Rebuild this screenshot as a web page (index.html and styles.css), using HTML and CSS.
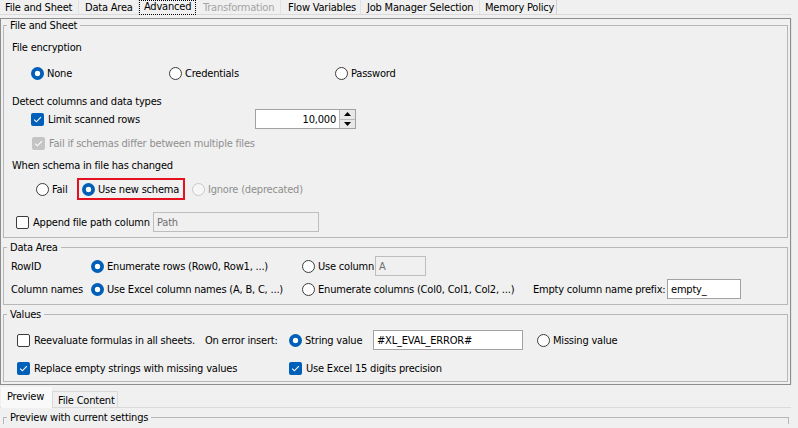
FILE: index.html
```html
<!DOCTYPE html>
<html>
<head>
<meta charset="utf-8">
<title>Excel Reader - Advanced</title>
<link rel="stylesheet" href="styles.css">
</head>
<body>
<div class="tabbar">
  <div class="tab tab-file">File and Sheet</div>
  <div class="tab tab-data">Data Area</div>
  <div class="tab tab-adv active"><span class="focus">Advanced</span></div>
  <div class="tab tab-trans disabled">Transformation</div>
  <div class="tab tab-flow">Flow Variables</div>
  <div class="tab tab-job">Job Manager Selection</div>
  <div class="tab tab-mem">Memory Policy</div>
</div>

<div class="panel">
  <fieldset class="group group-file">
    <legend>File and Sheet</legend>
    <div class="row r-enc-title"><span class="heading">File encryption</span></div>
    <div class="row r-enc">
      <span class="opt o-none"><span class="radio on"></span>None</span>
      <span class="opt o-cred"><span class="radio"></span>Credentials</span>
      <span class="opt"><span class="radio"></span>Password</span>
    </div>
    <div class="row r-detect"><span class="heading">Detect columns and data types</span></div>
    <div class="row r-limit">
      <span class="opt o-limit"><span class="check on"><svg viewBox="0 0 13 13" width="13" height="13"><path d="M3.2 6.6 L5.4 8.8 L9.9 4.2" fill="none" stroke="#fff" stroke-width="1.1"/></svg></span>Limit scanned rows</span>
      <div class="spinner">
        <div class="spin-field">10,000</div>
        <div class="spin-btns">
          <span class="spin-btn"><svg viewBox="0 0 7 4" width="7" height="4"><path d="M0 4 L3.5 0 L7 4 Z" fill="#000"/></svg></span>
          <span class="spin-btn"><svg viewBox="0 0 7 4" width="7" height="4"><path d="M0 0 L3.5 4 L7 0 Z" fill="#000"/></svg></span>
        </div>
      </div>
    </div>
    <div class="row r-failif">
      <span class="opt o-failif disabled"><span class="check on dis"><svg viewBox="0 0 13 13" width="13" height="13"><path d="M3.2 6.6 L5.4 8.8 L9.9 4.2" fill="none" stroke="#fff" stroke-width="1.1"/></svg></span>Fail if schemas differ between multiple files</span>
    </div>
    <div class="row r-when"><span class="heading">When schema in file has changed</span></div>
    <div class="row r-schema">
      <span class="opt o-fail"><span class="radio"></span>Fail</span>
      <span class="highlight"><span class="opt"><span class="radio on"></span>Use new schema</span></span>
      <span class="opt o-ignore disabled"><span class="radio dis"></span>Ignore (deprecated)</span>
    </div>
    <div class="row r-append">
      <span class="opt o-append"><span class="check"></span>Append file path column</span>
      <span class="field field-dis f-path">Path</span>
    </div>
  </fieldset>

  <fieldset class="group group-data">
    <legend>Data Area</legend>
    <div class="row r-rowid">
      <span class="rowlabel">RowID</span>
      <span class="opt o-col1"><span class="radio on"></span>Enumerate rows (Row0, Row1, ...)</span>
      <span class="opt o-usecol"><span class="radio"></span>Use column</span>
      <span class="field field-dis f-a">A</span>
    </div>
    <div class="row r-colnames">
      <span class="rowlabel">Column names</span>
      <span class="opt o-col1"><span class="radio on"></span>Use Excel column names (A, B, C, ...)</span>
      <span class="opt o-col2"><span class="radio"></span>Enumerate columns (Col0, Col1, Col2, ...)</span>
      <span class="plain p-prefix">Empty column name prefix:</span>
      <span class="field f-prefix">empty_</span>
    </div>
  </fieldset>

  <fieldset class="group group-values">
    <legend>Values</legend>
    <div class="row r-reeval">
      <span class="opt o-reeval"><span class="check"></span>Reevaluate formulas in all sheets.</span>
      <span class="plain p-onerror">On error insert:</span>
      <span class="opt o-string"><span class="radio on"></span>String value</span>
      <span class="field f-error">#XL_EVAL_ERROR#</span>
      <span class="opt o-missing"><span class="radio"></span>Missing value</span>
    </div>
    <div class="row r-replace">
      <span class="opt o-replace"><span class="check on"><svg viewBox="0 0 13 13" width="13" height="13"><path d="M3.2 6.6 L5.4 8.8 L9.9 4.2" fill="none" stroke="#fff" stroke-width="1.1"/></svg></span>Replace empty strings with missing values</span>
      <span class="opt"><span class="check on"><svg viewBox="0 0 13 13" width="13" height="13"><path d="M3.2 6.6 L5.4 8.8 L9.9 4.2" fill="none" stroke="#fff" stroke-width="1.1"/></svg></span>Use Excel 15 digits precision</span>
    </div>
  </fieldset>
</div>

<div class="subtabs">
  <div class="subtab sub-preview active">Preview</div>
  <div class="subtab sub-content">File Content</div>
</div>
<div class="preview-pane">
  <fieldset class="group group-preview">
    <legend>Preview with current settings</legend>
  </fieldset>
</div>
</body>
</html>
```

FILE: styles.css
```css
html, body {
  margin: 0;
  padding: 0;
}

body {
  width: 798px;
  height: 428px;
  overflow: hidden;
  background: #f0f0f0;
  color: #000;
  font-family: "DejaVu Sans Condensed", "DejaVu Sans", "Liberation Sans", sans-serif;
  font-size: 11px;
  line-height: 13px;
  letter-spacing: -0.2px;
}

/* ---------- top tabs ---------- */
.tabbar {
  display: flex;
  height: 14px;
  width: 791px;
  border-bottom: 1px solid #dadada;
}

.tab {
  box-sizing: border-box;
  height: 14px;
  padding-top: 1px;
  padding-left: 6px;
  white-space: nowrap;
  border-right: 1px solid #e2e2e2;
}

.tab-file { width: 79px; padding-left: 5px; }
.tab-data { width: 60px; }
.tab-adv { width: 58px; padding-left: 0; padding-top: 0; height: 15px; border-right: none; }
.tab-trans { width: 84px; }
.tab-flow { width: 80px; padding-left: 7px; }
.tab-job { width: 119px; }
.tab-mem { width: 77px; padding-left: 5px; border-right: 1px solid #d0d0d0; }

.tab.disabled { color: #a3a3a3; }

.tab .focus {
  display: block;
  box-sizing: border-box;
  width: 57px;
  height: 15px;
  padding-left: 4px;
  border: 1px dotted #000;
  line-height: 11px;
  background: #f0f0f0;
}

/* ---------- main panel ---------- */
.panel {
  box-sizing: border-box;
  width: 791px;
  margin-top: 3px;
  padding: 0 2px 2px 2px;
  border: 1px solid #8d8d8d;
  box-shadow: 1px 0 0 #e4e4e4;
}

.group {
  margin: 0;
  padding: 0;
  min-width: 0;
  border: 1px solid #b7b7b7;
}

.group legend {
  margin-left: 3px;
  padding: 0 3px;
  line-height: 13px;
}

.group-file { padding-bottom: 5px; }
.group-data { margin-top: 3px; padding-bottom: 5px; }
.group-values { margin-top: 3px; padding-bottom: 6px; }

.row {
  display: flex;
  align-items: center;
  white-space: nowrap;
}

.heading { margin-left: 8px; }

.opt {
  display: flex;
  align-items: center;
}

.opt.disabled { color: #8f8f8f; }

.plain { display: block; }

/* radios and checkboxes */
.radio {
  box-sizing: border-box;
  flex: none;
  width: 13px;
  height: 13px;
  margin-right: 3px;
  border: 1px solid #3c3c3c;
  border-radius: 50%;
  background: #fff;
}

.radio.on {
  border: none;
  background: radial-gradient(circle, #fff 0 2.4px, #005fb8 3.1px);
}

.radio.dis {
  border-color: #c9c9c9;
  background: #f6f6f6;
}

.check {
  box-sizing: border-box;
  flex: none;
  width: 13px;
  height: 13px;
  margin-right: 4px;
  border: 1px solid #3c3c3c;
  border-radius: 2px;
  background: #fff;
}

.check svg { display: block; }

.check.on {
  border: none;
  background: #005fb8;
}

.check.on.dis { background: #c4c4c4; }

/* text fields */
.field {
  box-sizing: border-box;
  display: block;
  flex: none;
  height: 20px;
  padding: 3px 0 0 3px;
  border: 1px solid #a2a2a2;
  background: #fff;
  color: #000;
}

.field-dis {
  border-color: #bdbdbd;
  background: #f0f0f0;
  color: #6f6f6f;
}

/* ---------- File and Sheet rows ---------- */
.r-enc-title { margin-top: 8px; height: 14px; }
.r-enc { margin-top: 12px; height: 14px; padding-left: 27px; }
.o-none { width: 138px; }
.o-cred { width: 166px; }

.r-detect { margin-top: 14px; height: 14px; }

.r-limit { margin-top: 1px; height: 20px; padding-left: 27px; }
.o-limit { width: 224px; }

.spinner {
  box-sizing: border-box;
  display: flex;
  width: 101px;
  height: 20px;
  border: 1px solid #a2a2a2;
  background: #fff;
}

.spin-field {
  flex: 1;
  padding: 3px 3px 0 0;
  text-align: right;
}

.spin-btns {
  display: flex;
  flex-direction: column;
  width: 15px;
  border-left: 1px solid #b9b9b9;
}

.spin-btn {
  flex: 1;
  display: flex;
  align-items: center;
  justify-content: center;
  background: #e8e8e8;
}

.spin-btn + .spin-btn { border-top: 1px solid #b9b9b9; }

.spin-btn svg { display: block; }

.r-failif { margin-top: 7px; height: 14px; padding-left: 28px; }

.r-when { margin-top: 8px; height: 14px; }

.r-schema { margin-top: 6px; height: 22px; padding-left: 32px; }
.o-fail { width: 41px; }

.highlight {
  box-sizing: border-box;
  display: flex;
  align-items: center;
  width: 108px;
  height: 22px;
  padding-left: 3px;
  border: 2px solid #e3121e;
}

.o-ignore { margin-left: 7px; }

.r-append { margin-top: 12px; height: 20px; padding-left: 12px; }
.o-append { width: 137px; flex: none; }
.f-path { width: 166px; }

/* ---------- Data Area rows ---------- */
.r-rowid { margin-top: 2px; height: 20px; padding-left: 7px; }
.r-colnames { margin-top: 3px; height: 20px; padding-left: 7px; }

.rowlabel { width: 80px; flex: none; }
.o-col1 { width: 211px; flex: none; }
.o-col2 { width: 231px; flex: none; }
.o-usecol { width: 73px; flex: none; }
.p-prefix { width: 134px; flex: none; }

.f-a { width: 51px; }
.f-prefix { width: 74px; }

/* ---------- Values rows ---------- */
.r-reeval { margin-top: 9px; height: 20px; padding-left: 13px; }
.o-reeval { width: 188px; flex: none; }
.p-onerror { width: 84px; flex: none; }
.o-string { width: 84px; flex: none; }
.f-error { width: 150px; }
.o-missing { margin-left: 14px; }

.r-replace { margin-top: 11px; height: 14px; padding-left: 13px; }
.o-replace { width: 272px; flex: none; }

/* ---------- bottom tabs ---------- */
.subtabs {
  display: flex;
  align-items: flex-end;
  height: 20px;
  margin-top: 2px;
  padding-left: 1px;
  border-bottom: 1px solid #dadada;
  width: 790px;
}

.subtab {
  box-sizing: border-box;
  white-space: nowrap;
}

.sub-preview {
  width: 51px;
  height: 21px;
  padding: 3px 0 0 6px;
  background: #f9f9f9;
  position: relative;
  top: 1px;
}

.sub-content {
  width: 66px;
  height: 16px;
  padding: 2px 0 0 5px;
  border: 1px solid #d9d9d9;
  border-bottom: none;
}

.preview-pane {
  width: 791px;
  padding: 3px 2px 0 3px;
  box-sizing: border-box;
}

.group-preview {
  height: 4px;
  border-bottom: none;
}
```
